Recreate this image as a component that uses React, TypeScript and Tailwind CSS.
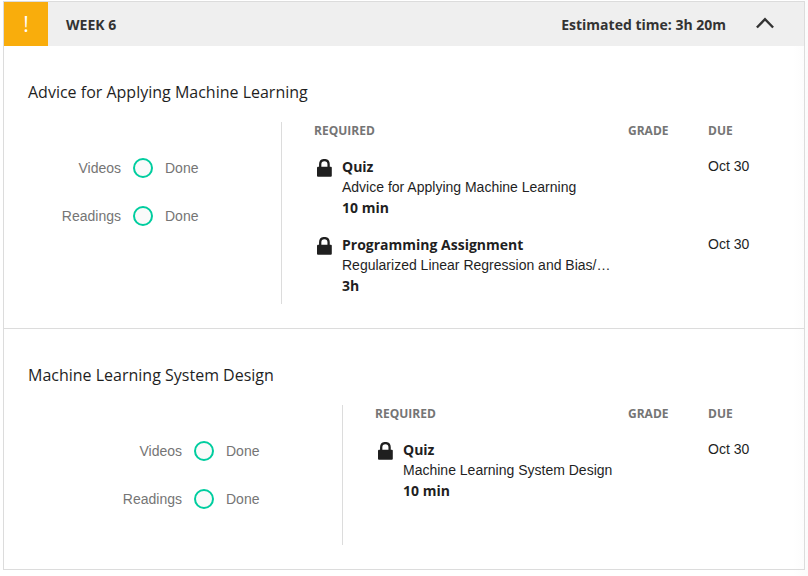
import React from "react";

type Task = { title: string; name: string; time: string; due: string };

type LessonProps = {
  heading: string;
  labelWidth: string;
  progressWidth: string;
  height: string;
  tasks: Task[];
};

function LockIcon() {
  return (
    <svg className="mt-[3px] ml-[3px] h-[18px] w-[15px] shrink-0" viewBox="0 0 15 18" fill="none">
      <path d="M3.2 9V5.3C3.2 2.7 5 1.1 7.4 1.1S11.6 2.7 11.6 5.3V9" stroke="#1f1f1f" strokeWidth="2.3" />
      <rect x="0" y="7.8" width="14.8" height="10" rx="1" fill="#1f1f1f" />
    </svg>
  );
}

function Progress({ label, labelWidth }: { label: string; labelWidth: string }) {
  return (
    <div className="flex h-12 items-center gap-3 text-sm text-[#757575]">
      <span className={`${labelWidth} text-right`}>{label}</span>
      <span className="size-5 rounded-full border-2 border-[#00cd9f] bg-[#fafafa]" />
      <span>Done</span>
    </div>
  );
}

function Lesson({ heading, labelWidth, progressWidth, height, tasks }: LessonProps) {
  return (
    <section className="px-6 pt-[34px]">
      <h2 className="font-['Open_Sans',sans-serif] text-base leading-6 text-[#1f1f1f]">{heading}</h2>
      <div className={`mt-[18px] flex ${height}`}>
        <div className={`${progressWidth} shrink-0 border-r border-[#dcdcdc] pt-[22px]`}>
          <Progress label="Videos" labelWidth={labelWidth} />
          <Progress label="Readings" labelWidth={labelWidth} />
        </div>
        <div className="min-w-0 flex-1 pl-8">
          <div className="flex font-['Open_Sans',sans-serif] text-xs leading-[18px] font-bold text-[#757575]">
            <span className="flex-1">REQUIRED</span>
            <span className="w-20">GRADE</span>
            <span className="w-[72px]">DUE</span>
          </div>
          {tasks.map((task) => (
            <div key={task.title} className="mt-4 flex h-[62px]">
              <LockIcon />
              <div className="ml-[10px] min-w-0 flex-1 text-[14px] leading-[21px] text-[#1f1f1f]">
                <div className="h-5 font-['Open_Sans',sans-serif] font-bold">{task.title}</div>
                <div className="h-[21px] pt-px leading-[21px] whitespace-nowrap">{task.name}</div>
                <div className="font-['Open_Sans',sans-serif] font-bold">{task.time}</div>
              </div>
              <div className="w-20" />
              <div className="w-[72px] text-[14px] leading-5 text-[#1f1f1f]">{task.due}</div>
            </div>
          ))}
        </div>
      </div>
    </section>
  );
}

export default function App() {
  return (
    <div className="h-[576px] w-[808px] overflow-hidden bg-[linear-gradient(to_right,#fff_793px,#fbfbfb_808px)] pt-px pl-[3px] font-['Liberation_Sans',Arial,sans-serif]">
      <main className="h-[569px] w-[802px] border border-[#dcdcdc]">
        <header className="flex h-11 items-center bg-[#efefef] font-['Open_Sans',sans-serif] text-sm font-bold text-[#333]">
          <span className="flex size-11 items-center justify-center bg-[#f9ad0c] text-[21px] leading-none font-normal text-white">!</span>
          <span className="ml-[18px] flex-1 pt-0.5">WEEK 6</span>
          <span className="pt-0.5">Estimated time: 3h 20m</span>
          <svg className="mr-[30px] mb-0.5 ml-[29px] h-3 w-[19px]" viewBox="0 0 19 12" fill="none">
            <path d="M1.9 10.5L10 2.2L18.1 10.5" stroke="#333" strokeWidth="2.4" />
          </svg>
        </header>
        <Lesson
          heading="Advice for Applying Machine Learning"
          labelWidth="w-[93px]"
          progressWidth="w-[254px]"
          height="h-[182px]"
          tasks={[
            { title: "Quiz", name: "Advice for Applying Machine Learning", time: "10 min", due: "Oct 30" },
            {
              title: "Programming Assignment",
              name: "Regularized Linear Regression and Bias/…",
              time: "3h",
              due: "Oct 30",
            },
          ]}
        />
        <div className="mt-6 border-t border-[#dcdcdc]" />
        <Lesson
          heading="Machine Learning System Design"
          labelWidth="w-[154px]"
          progressWidth="w-[315px]"
          height="h-[140px]"
          tasks={[{ title: "Quiz", name: "Machine Learning System Design", time: "10 min", due: "Oct 30" }]}
        />
      </main>
    </div>
  );
}
